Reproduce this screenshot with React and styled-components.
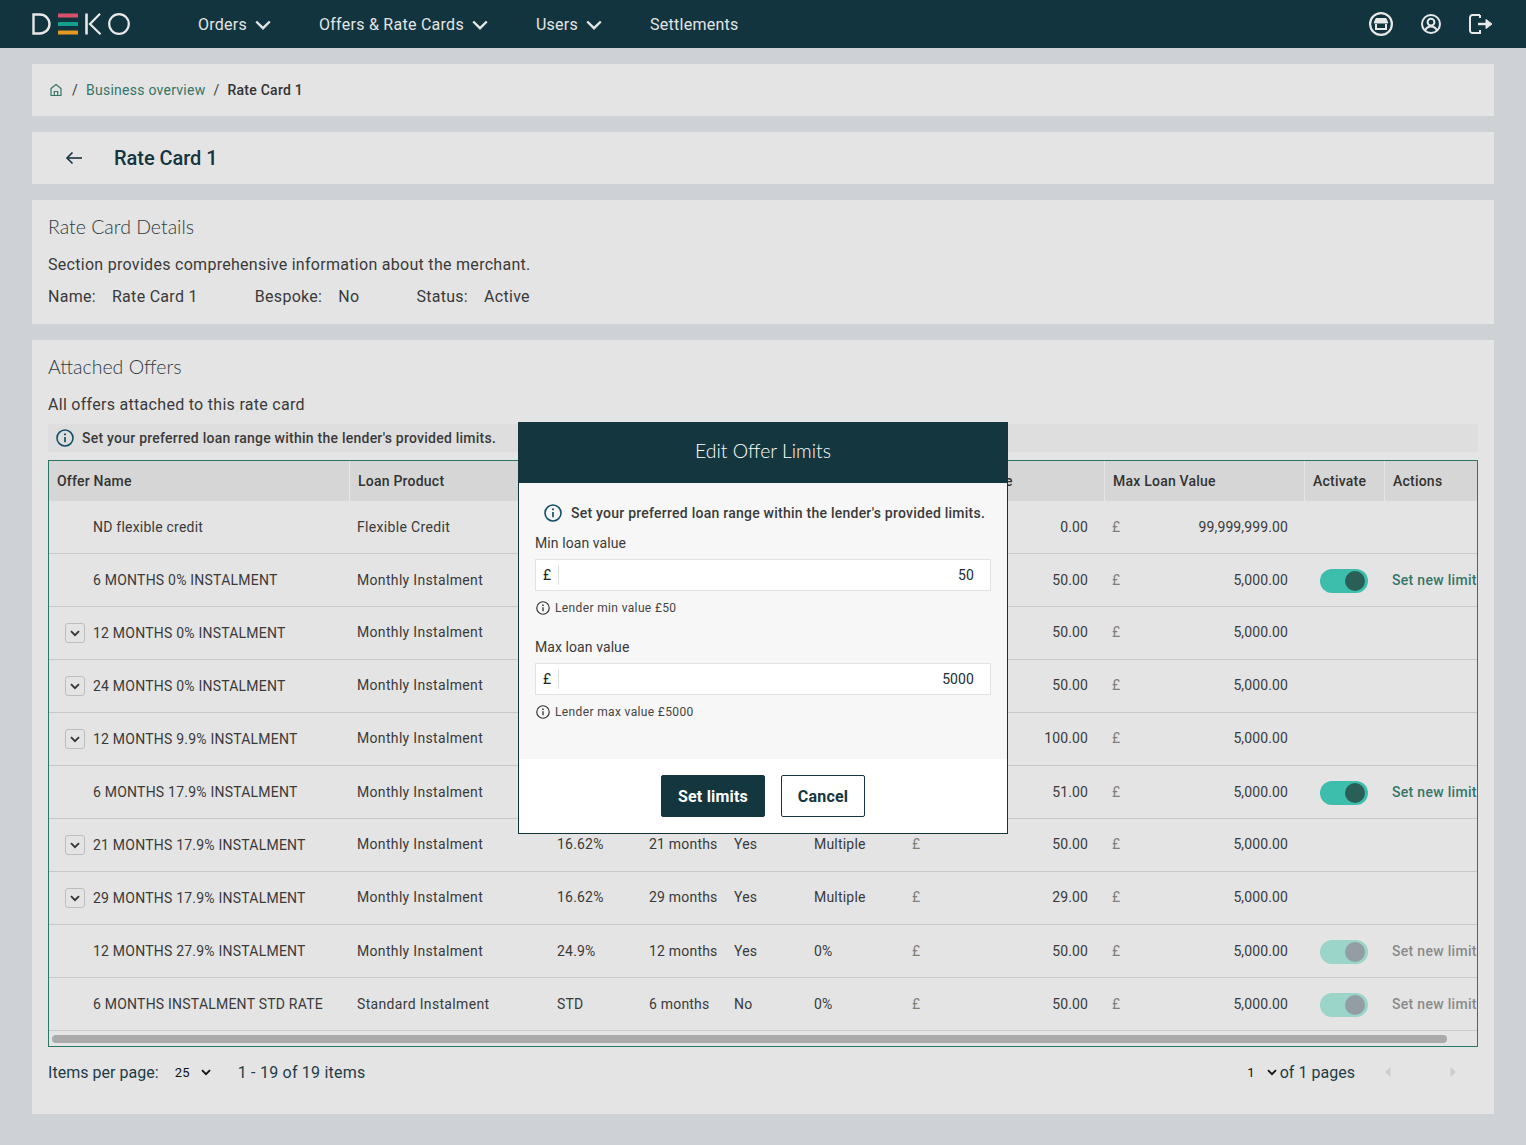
import React from "react";
import styled, { createGlobalStyle } from "styled-components";

const Global = createGlobalStyle`
  html, body { margin: 0; padding: 0; }
  body { background: #ced1d6; font-family: Roboto, "Liberation Sans", sans-serif; color: #3a3a3a; letter-spacing: 0.3px; }
  * { box-sizing: border-box; }
`;

const Page = styled.div`min-height: 1145px; position: relative; overflow: hidden;`;
const TopBar = styled.header`height: 48px; background: #12343f; display: flex; align-items: center; padding: 0 32px; color: #e4e4e4;`;
const Logo = styled.svg`width: 98px; height: 22px; display: block; flex: none;`;
const Nav = styled.nav`display: flex; align-items: center; gap: 48px; margin-left: 68px; flex: 1; padding-top: 1px;`;
const NavItem = styled.div`display: flex; align-items: center; gap: 8px; font-size: 16px; font-weight: 400; line-height: 24px; letter-spacing: 0.26px;`;
const TopIcons = styled.div`display: flex; align-items: center; gap: 28px; margin-right: 1px;`;
const Main = styled.main`padding: 16px 32px 31px; display: flex; flex-direction: column; gap: 16px;`;
const Card = styled.section`background: #e4e4e4; padding: 16px 16px 15px;`;
const BreadcrumbBar = styled(Card)`height: 52px; padding: 0 16px; display: flex; align-items: center; font-size: 14px; gap: 8px; color: #3a3a3a; letter-spacing: 0.25px;`;
const CrumbLink = styled.span`color: #357567;`;
const CrumbCurrent = styled.span`color: #333; font-weight: 500;`;
const TitleBar = styled(Card)`height: 52px; padding: 0 0 0 33px; display: flex; align-items: center; gap: 31px;`;
const Title = styled.h1`margin: 0; font-size: 20px; font-weight: 500; color: #14343f; line-height: 24px; letter-spacing: -0.05px;`;
const Heading = styled.h2`margin: 0; font-family: Lato, sans-serif; font-size: 19.5px; font-weight: 300; line-height: 22px; color: #2f3a3f; letter-spacing: 0;`;
const Desc = styled.p`margin: 15px 0 0; font-size: 16px; line-height: 24px; color: #3a3a3a; letter-spacing: 0.29px;`;
const InfoRow = styled.div`margin-top: 8px; display: flex; font-size: 16px; line-height: 24px; gap: 57px; letter-spacing: 0.29px;`;
const InfoItem = styled.div`display: flex; gap: 16px;`;
const AlertStrip = styled.div`margin-top: 7px; height: 28px; background: #dedede; display: flex; align-items: center; gap: 8px; padding-left: 8px; font-size: 14px; font-weight: 500; color: #3a3a3a; letter-spacing: 0.24px; white-space: nowrap;`;
const TableWrap = styled.div`margin-top: 8px; border: 1px solid #2b7565; overflow: hidden;`;
const COLS = "300px 200px 92px 85px 80px 98px 200px 200px 80px 120px";
const HeadRow = styled.div`display: grid; grid-template-columns: ${COLS}; height: 40px; background: #d6d6d6; width: 1455px;`;
const HeadCell = styled.div`padding-left: 8px; display: flex; align-items: center; font-size: 14px; font-weight: 500; color: #333; white-space: nowrap; letter-spacing: 0.22px; border-left: ${p => (p.$first ? "0" : "1px solid #e6e6e6")};`;
const Row = styled.div`display: grid; grid-template-columns: ${COLS}; height: 53px; border-bottom: 1px solid #c8c8c8; width: 1455px; font-size: 14px; color: #3a3a3a;`;
const Cell = styled.div`display: flex; align-items: center; padding: 0 8px ${p => (p.$raised ? "2px" : "0")}; white-space: nowrap; letter-spacing: ${p => p.$spacing || "0.33px"};`;
const NameCell = styled.div`display: flex; align-items: center; padding-left: ${p => (p.$expandable ? "16px" : "44px")}; gap: 8px; white-space: nowrap; letter-spacing: 0.22px;`;
const Expander = styled.button`width: 20px; height: 20px; padding: 0; border: 1px solid #bdbdbd; border-radius: 3px; background: transparent; display: flex; align-items: center; justify-content: center; color: #333;`;
const MoneyCell = styled(Cell)`justify-content: space-between; padding-right: 16px; letter-spacing: 0.12px;`;
const Pound = styled.span`color: #808080;`;
const ToggleCell = styled.div`display: flex; align-items: center; padding: 2px 0 0 16px;`;
const Toggle = styled.div`width: 48px; height: 24px; border-radius: 12px; background: ${p => (p.$disabled ? "#9bd4c9" : "#3dbdab")}; display: flex; align-items: center; justify-content: flex-end; padding-right: 3px;`;
const Thumb = styled.div`width: 20px; height: 20px; border-radius: 50%; background: ${p => (p.$disabled ? "#929ea3" : "#2a5f58")};`;
const ActionCell = styled(Cell)`font-weight: 500; letter-spacing: 0.3px; color: ${p => (p.$disabled ? "#8a8a8a" : "#357567")};`;
const Scroller = styled.div`height: 15px; padding: 4px 30px 3px 3px;`;
const ScrollThumb = styled.div`height: 8px; border-radius: 4px; background: #aaaaaa;`;
const Footer = styled.div`margin-top: 13px; height: 24px; margin-bottom: 15px; display: flex; align-items: center; justify-content: space-between; font-size: 16px; color: #1c3d48; letter-spacing: 0.03px;`;
const FooterGroup = styled.div`display: flex; align-items: center;`;
const SelectValue = styled.span`font-size: 13px; color: #111; letter-spacing: 0.2px;`;
const SelectChevron = styled.span`display: flex; margin: ${p => p.$margin};`;
const RangeText = styled.span`margin-left: 27px; letter-spacing: 0.22px;`;
const PerPage = styled(SelectValue)`margin-left: 16px;`;
const PageArrows = styled.div`display: flex; align-items: center; gap: 59px; margin: 0 0 0 30px; padding-right: 22px;`;

const Modal = styled.div`position: fixed; left: 518px; top: 422px; width: 490px; height: 412px; background: #fff; border: 1px solid #12343f; border-top: 0; display: flex; flex-direction: column;`;
const ModalHeader = styled.div`height: 61px; background: #14363f; color: #fff; display: flex; align-items: center; justify-content: center; font-family: Lato, sans-serif; font-size: 19.4px; font-weight: 300; margin: 0 -1px; padding-bottom: 5px; letter-spacing: 0;`;
const ModalBody = styled.div`height: 276px; background: #f7f7f7; padding: 20px 16px 0; display: flex; flex-direction: column;`;
const ModalInfo = styled.div`display: flex; align-items: center; gap: 9px; padding-left: 9px; height: 20px; font-size: 14px; font-weight: 500; color: #3a3a3a; letter-spacing: 0.24px; white-space: nowrap;`;
const Field = styled.div`margin-top: ${p => p.$top}px; display: flex; flex-direction: column;`;
const Label = styled.label`font-size: 14px; line-height: 20px; color: #3a3a3a; letter-spacing: 0.08px;`;
const InputBox = styled.div`margin-top: 6px; width: 456px; height: 32px; background: #fff; border: 1px solid #e2e2e2; display: flex; align-items: center; font-size: 14px; color: #222c33; letter-spacing: 0.1px;`;
const Prefix = styled.span`width: 23px; height: 20px; padding-left: 7px; border-right: 1px solid #e2e2e2; line-height: 20px; color: #222; flex: none;`;
const InputValue = styled.span`flex: 1; text-align: right; padding-right: 16px;`;
const Hint = styled.div`margin-top: 9px; padding-left: 1px; height: 16px; display: flex; align-items: center; gap: 5px; font-size: 12px; color: #444; letter-spacing: 0.36px;`;
const ModalFooter = styled.div`flex: 1; display: flex; align-items: center; justify-content: center; gap: 16px;`;
const Primary = styled.button`width: 104px; height: 42px; background: #14363f; color: #fff; border: 1px solid #14363f; border-radius: 2px; font: 700 16px Roboto, sans-serif; letter-spacing: 0.2px;`;
const Secondary = styled(Primary)`width: 84px; background: #fff; color: #14363f;`;

const Chevron = () => (
  <svg width="16" height="10" viewBox="0 0 16 10" fill="none" stroke="#e4e4e4" strokeWidth="2.4"><path d="M1.2 1.5 8 8.2l6.8-6.7" /></svg>
);
const SmallChevron = ({ color = "#111" }) => (
  <svg width="10" height="7" viewBox="0 0 10 7" fill="none" stroke={color} strokeWidth="1.8"><path d="M1 1.2 5 5.2l4-4" /></svg>
);
const InfoIcon = ({ size = 18, color = "#14506b", width = 1.6 }) => (
  <svg width={size} height={size} viewBox="0 0 18 18" fill="none" stroke={color} strokeWidth={width}>
    <circle cx="9" cy="9" r="8" /><path d="M9 8v5.2" strokeWidth="1.7" /><path d="M9 4.5v1.8" strokeWidth="1.9" />
  </svg>
);

const rows = [
  ["ND flexible credit", "Flexible Credit", "", "", "", "", "0.00", "99,999,999.00", false, null],
  ["6 MONTHS 0% INSTALMENT", "Monthly Instalment", "", "", "", "", "50.00", "5,000.00", false, "on"],
  ["12 MONTHS 0% INSTALMENT", "Monthly Instalment", "", "", "", "", "50.00", "5,000.00", true, null],
  ["24 MONTHS 0% INSTALMENT", "Monthly Instalment", "", "", "", "", "50.00", "5,000.00", true, null],
  ["12 MONTHS 9.9% INSTALMENT", "Monthly Instalment", "", "", "", "", "100.00", "5,000.00", true, null],
  ["6 MONTHS 17.9% INSTALMENT", "Monthly Instalment", "", "", "", "", "51.00", "5,000.00", false, "on"],
  ["21 MONTHS 17.9% INSTALMENT", "Monthly Instalment", "16.62%", "21 months", "Yes", "Multiple", "50.00", "5,000.00", true, null],
  ["29 MONTHS 17.9% INSTALMENT", "Monthly Instalment", "16.62%", "29 months", "Yes", "Multiple", "29.00", "5,000.00", true, null],
  ["12 MONTHS 27.9% INSTALMENT", "Monthly Instalment", "24.9%", "12 months", "Yes", "0%", "50.00", "5,000.00", false, "off"],
  ["6 MONTHS INSTALMENT STD RATE", "Standard Instalment", "STD", "6 months", "No", "0%", "50.00", "5,000.00", false, "off"],
];
const headers = ["Offer Name", "Loan Product", "", "", "", "", "Min Loan Value", "Max Loan Value", "Activate", "Actions"];

export default function App() {
  return (
    <Page>
      <Global />
      <TopBar>
        <Logo viewBox="0 0 98 22" fill="none" role="img" aria-label="DEKO">
          <path d="M1.5 1.5h6.5a9 9 0 0 1 0 19H1.5z" stroke="#e8e8e8" strokeWidth="2.4" />
          <rect x="26" y="0.5" width="20" height="4" rx="0.5" fill="#d9506a" />
          <rect x="26" y="9" width="20" height="4" rx="0.5" fill="#14a08c" />
          <rect x="26" y="17.5" width="20" height="4" rx="0.5" fill="#e39a1f" />
          <path d="M54.5 0.5v21" stroke="#e8e8e8" strokeWidth="2.6" />
          <path d="M68 0.8 58 11l10.5 10.2" stroke="#e8e8e8" strokeWidth="2.2" />
          <circle cx="87" cy="11" r="9.8" stroke="#e8e8e8" strokeWidth="2.2" />
        </Logo>
        <Nav>
          <NavItem>Orders <Chevron /></NavItem>
          <NavItem>Offers &amp; Rate Cards <Chevron /></NavItem>
          <NavItem>Users <Chevron /></NavItem>
          <NavItem>Settlements</NavItem>
        </Nav>
        <TopIcons>
          <svg width="24" height="24" viewBox="0 0 24 24" fill="none" stroke="#e8e8e8">
            <circle cx="12" cy="12" r="10.900" strokeWidth="2.200" />
            <path d="M7 6.500h10l1.800 4.500H5.200z" fill="#e8e8e8" strokeWidth="1" />
            <path d="M7 12v5h10v-5" strokeWidth="2" />
          </svg>
          <svg width="20" height="20" viewBox="0 0 20 20" fill="none" stroke="#e8e8e8" strokeWidth="2">
            <circle cx="10" cy="10" r="9" /><circle cx="10" cy="8.200" r="3.400" /><path d="M4 16.800c1-2.800 3.300-4.300 6-4.300s5 1.500 6 4.300" />
          </svg>
          <svg width="24" height="20" viewBox="0 0 24 20" fill="none" stroke="#e8e8e8" strokeWidth="2">
            <path d="M11 1H3.500A2.500 2.500 0 0 0 1 3.500v13A2.500 2.500 0 0 0 3.500 19H11v-3" /><path d="M11 1v3" />
            <path d="M9 10h9" strokeWidth="2.400" /><path d="M17 5.500 23 10l-6 4.500z" fill="#e8e8e8" strokeWidth="1" />
          </svg>
        </TopIcons>
      </TopBar>
      <Main>
        <BreadcrumbBar>
          <svg width="16" height="16" viewBox="0 0 16 16" fill="none" stroke="#357567" strokeWidth="1.200">
            <path d="M3 6.500 8 2.500l5 4v7H3z" /><path d="M6.300 13.500V9.500h3.400v4" />
          </svg>
          <span>/</span>
          <CrumbLink>Business overview</CrumbLink>
          <span>/</span>
          <CrumbCurrent>Rate Card 1</CrumbCurrent>
        </BreadcrumbBar>
        <TitleBar>
          <svg width="18" height="14" viewBox="0 0 18 14" fill="none" stroke="#14343f" strokeWidth="1.600">
            <path d="M17 7H2" /><path d="M7.500 1.500 2 7l5.500 5.500" />
          </svg>
          <Title>Rate Card 1</Title>
        </TitleBar>
        <Card>
          <Heading>Rate Card Details</Heading>
          <Desc>Section provides comprehensive information about the merchant.</Desc>
          <InfoRow>
            <InfoItem><span>Name:</span><span>Rate Card 1</span></InfoItem>
            <InfoItem><span>Bespoke:</span><span>No</span></InfoItem>
            <InfoItem><span>Status:</span><span>Active</span></InfoItem>
          </InfoRow>
        </Card>
        <Card>
          <Heading>Attached Offers</Heading>
          <Desc>All offers attached to this rate card</Desc>
          <AlertStrip>
            <InfoIcon />
            <span>Set your preferred loan range within the lender's provided limits.</span>
          </AlertStrip>
          <TableWrap>
            <HeadRow>
              {headers.map((h, i) => <HeadCell key={i} $first={i === 0}>{h}</HeadCell>)}
            </HeadRow>
            {rows.map((r) => {
              const [name, product, apr, term, promo, deposit, min, max, expandable, active] = r;
              const off = active === "off";
              return (
                <Row key={name}>
                  <NameCell $expandable={expandable}>
                    {expandable && <Expander aria-label="Expand"><SmallChevron color="#333" /></Expander>}
                    {name}
                  </NameCell>
                  <Cell $raised={expandable}>{product}</Cell>
                  <Cell $raised={expandable} $spacing="0.2px">{apr}</Cell>
                  <Cell $raised={expandable} $spacing="0.2px">{term}</Cell>
                  <Cell $raised={expandable} $spacing="0.2px">{promo}</Cell>
                  <Cell $raised={expandable} $spacing="0.2px">{deposit}</Cell>
                  <MoneyCell $raised={expandable}><Pound>£</Pound><span>{min}</span></MoneyCell>
                  <MoneyCell $raised={expandable}><Pound>£</Pound><span>{max}</span></MoneyCell>
                  {active ? <ToggleCell><Toggle $disabled={off}><Thumb $disabled={off} /></Toggle></ToggleCell> : <div />}
                  {active ? <ActionCell $disabled={off}>Set new limit</ActionCell> : <div />}
                </Row>
              );
            })}
            <Scroller><ScrollThumb /></Scroller>
          </TableWrap>
          <Footer>
            <FooterGroup>
              <span>Items per page:</span>
              <PerPage>25</PerPage>
              <SelectChevron $margin="0 0 0 11px"><SmallChevron /></SelectChevron>
              <RangeText>1 - 19 of 19 items</RangeText>
            </FooterGroup>
            <FooterGroup>
              <SelectValue>1</SelectValue>
              <SelectChevron $margin="0 3px 0 12px"><SmallChevron /></SelectChevron>
              <span>of 1 pages</span>
              <PageArrows>
                <svg width="6" height="10" viewBox="0 0 6 10" fill="#c8cbd0"><path d="M5.500 0v10L0 5z" /></svg>
                <svg width="6" height="10" viewBox="0 0 6 10" fill="#c8cbd0"><path d="M.5 0v10L6 5z" /></svg>
              </PageArrows>
            </FooterGroup>
          </Footer>
        </Card>
      </Main>
      <Modal>
        <ModalHeader>Edit Offer Limits</ModalHeader>
        <ModalBody>
          <ModalInfo>
            <InfoIcon />
            <span>Set your preferred loan range within the lender's provided limits.</span>
          </ModalInfo>
          <Field $top={10}>
            <Label>Min loan value</Label>
            <InputBox><Prefix>£</Prefix><InputValue>50</InputValue></InputBox>
            <Hint><InfoIcon size={14} color="#333" width={1.500} /><span>Lender min value £50</span></Hint>
          </Field>
          <Field $top={21}>
            <Label>Max loan value</Label>
            <InputBox><Prefix>£</Prefix><InputValue>5000</InputValue></InputBox>
            <Hint><InfoIcon size={14} color="#333" width={1.500} /><span>Lender max value £5000</span></Hint>
          </Field>
        </ModalBody>
        <ModalFooter>
          <Primary>Set limits</Primary>
          <Secondary>Cancel</Secondary>
        </ModalFooter>
      </Modal>
    </Page>
  );
}
